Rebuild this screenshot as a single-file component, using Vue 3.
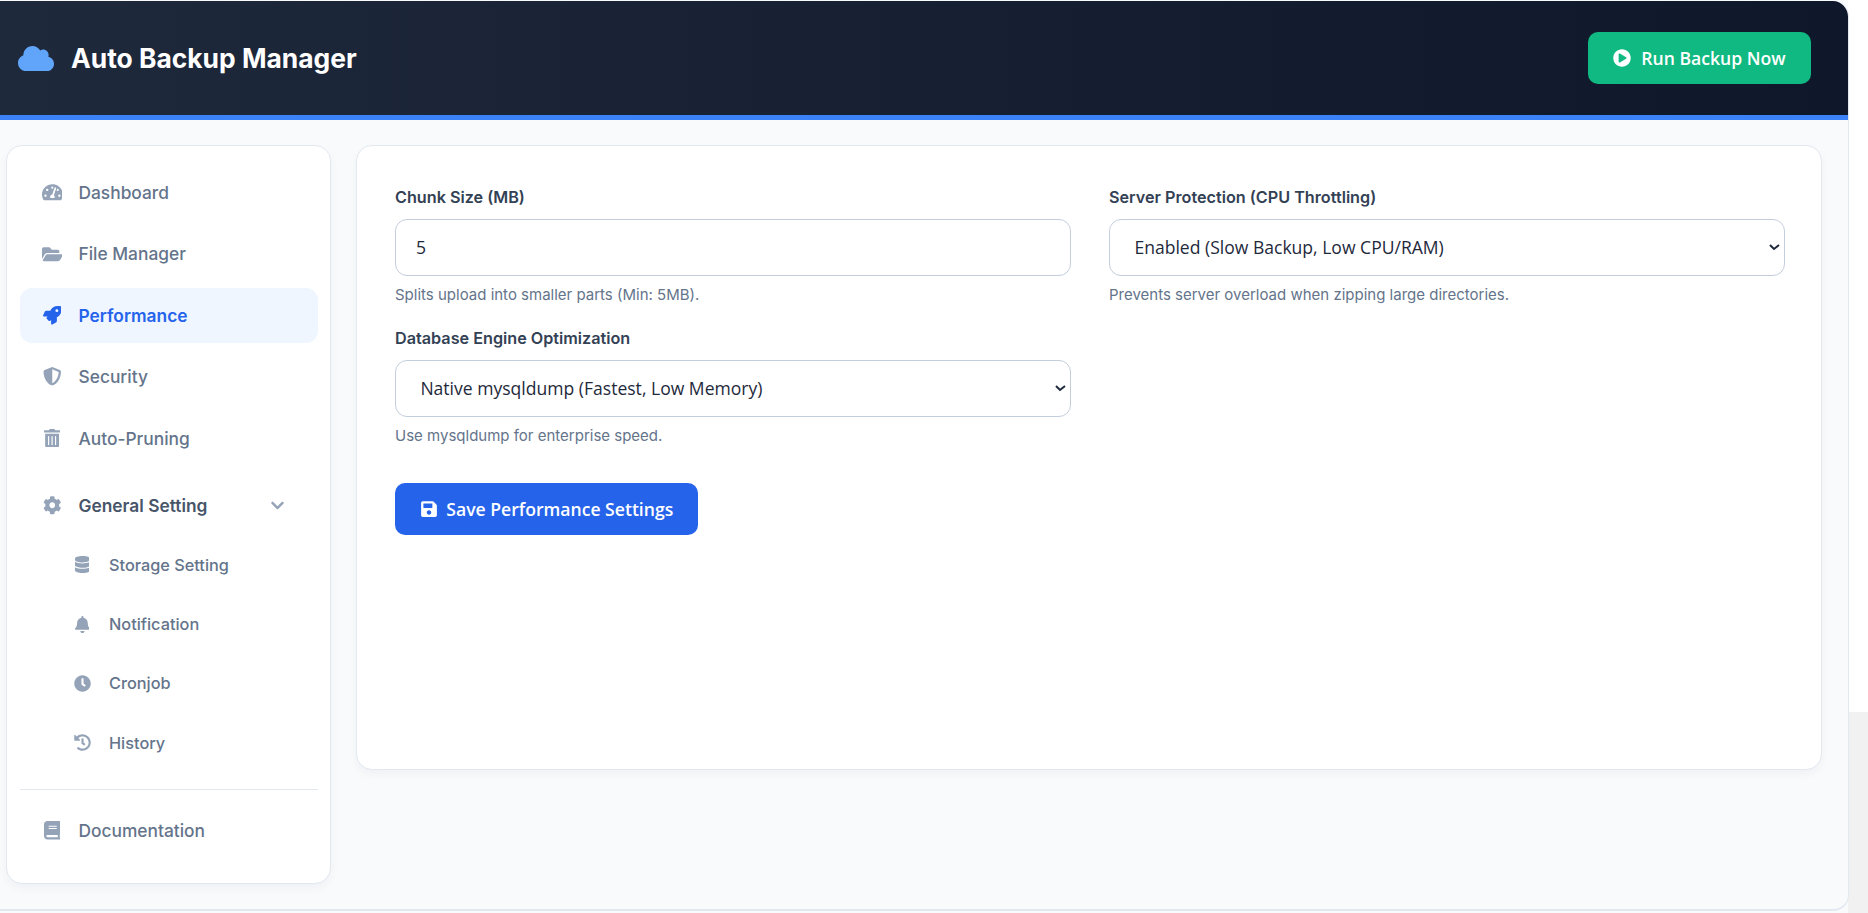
<script setup>
const icons = {
  gauge: { box: '0 0 576 512', d: 'M288 32C128.94 32 0 160.94 0 320c0 52.8 14.25 102.26 39.06 144.8 5.61 9.62 16.3 15.2 27.44 15.2h443c11.14 0 21.83-5.58 27.44-15.2C561.75 422.26 576 372.8 576 320c0-159.06-128.94-288-288-288zm0 64c14.71 0 26.58 10.13 30.32 23.65-1.11 2.26-2.64 4.23-3.45 6.67l-9.22 27.67c-5.13 3.49-10.97 6.01-17.64 6.01-17.67 0-32-14.33-32-32S270.33 96 288 96zM96 384c-17.67 0-32-14.33-32-32s14.33-32 32-32 32 14.33 32 32-14.33 32-32 32zm48-160c-17.67 0-32-14.33-32-32s14.33-32 32-32 32 14.33 32 32-14.33 32-32 32zm246.77-72.41l-61.33 184C343.13 347.33 352 364.54 352 384c0 11.72-3.38 22.55-8.88 32H232.88c-5.5-9.45-8.88-20.28-8.88-32 0-33.94 26.5-61.43 59.9-63.59l61.34-184.01c4.17-12.56 17.73-19.45 30.36-15.17 12.57 4.19 19.35 17.77 15.17 30.36zm14.66 57.2l15.52-46.55c3.47-1.29 7.13-2.23 11.05-2.23 17.67 0 32 14.33 32 32s-14.33 32-32 32c-11.38-.01-20.89-6.28-26.57-15.22zM480 384c-17.67 0-32-14.33-32-32s14.33-32 32-32 32 14.33 32 32-14.33 32-32 32z' },
  folder: { box: '0 0 576 512', d: 'M572.694 292.093L500.27 416.248A63.997 63.997 0 0 1 444.989 448H45.025c-18.523 0-30.064-20.093-20.731-36.093l72.424-124.155A64 64 0 0 1 152 256h399.964c18.523 0 30.064 20.093 20.73 36.093zM152 224h328v-48c0-26.51-21.49-48-48-48H272l-64-64H48C21.49 64 0 85.49 0 112v278.046l69.077-118.418C86.214 242.25 117.989 224 152 224z' },
  rocket: { box: '0 0 512 512', d: 'M505.12019,19.09375c-1.18945-5.53125-6.65819-11-12.207-12.1875C460.716,0,435.507,0,410.40747,0,307.17523,0,245.26909,55.20312,199.05238,128H94.83772c-16.34763.01562-35.55658,11.875-42.88664,26.48438L2.51562,253.29688A28.4,28.4,0,0,0,0,264a24.00867,24.00867,0,0,0,24.00582,24H127.81618l-22.47457,22.46875c-11.36521,11.36133-12.99607,32.25781,0,45.25L156.24582,406.625c11.15623,11.1875,32.15619,13.15625,45.27726,0l22.47457-22.46875V488a24.00867,24.00867,0,0,0,24.00581,24,28.55934,28.55934,0,0,0,10.707-2.51562l98.72834-49.39063c14.62888-7.29687,26.50776-26.5,26.50776-42.85937V312.79688c72.59753-46.3125,128.03493-108.40626,128.03493-211.09376C512.07526,76.5,512.07526,51.29688,505.12019,19.09375ZM384.04033,168A40,40,0,1,1,424.05,128,40.02322,40.02322,0,0,1,384.04033,168Z' },
  shield: { box: '0 0 512 512', d: 'M466.5 83.7l-192-80a48.15 48.15 0 0 0-36.9 0l-192 80C27.7 91.1 16 108.6 16 128c0 198.5 114.5 335.7 221.5 380.3 11.8 4.9 25.1 4.9 36.9 0C360.1 472.6 496 349.3 496 128c0-19.4-11.7-36.9-29.5-44.3zM256.1 446.3l-.1-381 175.9 73.3c-3.3 151.4-82.1 261.1-175.8 307.7z' },
  trash: { box: '0 0 448 512', d: 'M32 464a48 48 0 0 0 48 48h288a48 48 0 0 0 48-48V128H32zm272-256a16 16 0 0 1 32 0v224a16 16 0 0 1-32 0zm-96 0a16 16 0 0 1 32 0v224a16 16 0 0 1-32 0zm-96 0a16 16 0 0 1 32 0v224a16 16 0 0 1-32 0zM432 32H312l-9.4-18.7A24 24 0 0 0 281.1 0H166.8a23.72 23.72 0 0 0-21.4 13.3L136 32H16A16 16 0 0 0 0 48v32a16 16 0 0 0 16 16h416a16 16 0 0 0 16-16V48a16 16 0 0 0-16-16z' },
  cog: { box: '0 0 512 512', d: 'M487.4 315.7l-42.6-24.6c4.3-23.2 4.3-47 0-70.2l42.6-24.6c4.9-2.8 7.1-8.6 5.5-14-11.1-35.6-30-67.8-54.7-94.6-3.8-4.1-10-5.1-14.8-2.3L380.8 110c-17.9-15.4-38.5-27.3-60.8-35.1V25.8c0-5.6-3.9-10.5-9.4-11.7-36.7-8.2-74.3-7.8-109.2 0-5.5 1.2-9.4 6.1-9.4 11.7V75c-22.2 7.9-42.8 19.8-60.8 35.1L88.7 85.5c-4.9-2.8-11-1.9-14.8 2.3-24.7 26.7-43.6 58.9-54.7 94.6-1.7 5.4.6 11.2 5.5 14L67.3 221c-4.3 23.2-4.3 47 0 70.2l-42.6 24.6c-4.9 2.8-7.1 8.6-5.5 14 11.1 35.6 30 67.8 54.7 94.6 3.8 4.1 10 5.1 14.8 2.3l42.6-24.6c17.9 15.4 38.5 27.3 60.8 35.1v49.2c0 5.6 3.9 10.5 9.4 11.7 36.7 8.2 74.3 7.8 109.2 0 5.5-1.2 9.4-6.1 9.4-11.7v-49.2c22.2-7.9 42.8-19.8 60.8-35.1l42.6 24.6c4.9 2.8 11 1.9 14.8-2.3 24.7-26.7 43.6-58.9 54.7-94.6 1.5-5.5-.7-11.3-5.6-14.1zM256 336c-44.1 0-80-35.9-80-80s35.9-80 80-80 80 35.9 80 80-35.9 80-80 80z' },
  chevron: { box: '0 0 448 512', d: 'M207.029 381.476L12.686 187.132c-9.373-9.373-9.373-24.569 0-33.941l22.667-22.667c9.357-9.357 24.522-9.375 33.901-.04L224 284.505l154.745-154.021c9.379-9.335 24.544-9.317 33.901.04l22.667 22.667c9.373 9.373 9.373 24.569 0 33.941L240.971 381.476c-9.373 9.372-24.569 9.372-33.942 0z' },
  database: { box: '0 0 448 512', d: 'M448 73.143v45.714C448 159.143 347.667 192 224 192S0 159.143 0 118.857V73.143C0 32.857 100.333 0 224 0s224 32.857 224 73.143zM448 176v102.857C448 319.143 347.667 352 224 352S0 319.143 0 278.857V176c48.125 33.143 136.208 48.572 224 48.572S399.874 209.143 448 176zm0 160v102.857C448 479.143 347.667 512 224 512S0 479.143 0 438.857V336c48.125 33.143 136.208 48.572 224 48.572S399.874 369.143 448 336z' },
  bell: { box: '0 0 448 512', d: 'M224 512c35.32 0 63.97-28.65 63.97-64H160.03c0 35.35 28.65 64 63.97 64zm215.39-149.71c-19.32-20.76-55.47-51.99-55.47-154.29 0-77.7-54.48-139.9-127.94-155.16V32c0-17.67-14.32-32-31.98-32s-31.98 14.33-31.98 32v20.84C118.56 68.1 64.08 130.3 64.08 208c0 102.3-36.15 133.53-55.47 154.29-6 6.45-8.66 14.16-8.61 21.71.11 16.4 12.98 32 32.1 32h383.8c19.12 0 32-15.6 32.1-32 .05-7.55-2.61-15.27-8.61-21.71z' },
  clock: { box: '0 0 512 512', d: 'M256,8C119,8,8,119,8,256S119,504,256,504,504,393,504,256,393,8,256,8Zm92.49,313h0l-20,25a16,16,0,0,1-22.49,2.5h0l-67-49.72a40,40,0,0,1-15-31.23V112a16,16,0,0,1,16-16h32a16,16,0,0,1,16,16V256l58,42.5A16,16,0,0,1,348.49,321Z' },
  history: { box: '0 0 512 512', d: 'M504 255.531c.253 136.64-111.18 248.372-247.82 248.468-59.015.042-113.223-20.53-155.822-54.911-11.077-8.94-11.905-25.541-1.839-35.607l11.267-11.267c8.609-8.609 22.353-9.551 31.891-1.984C173.062 425.135 212.781 440 256 440c101.705 0 184-82.311 184-184 0-101.705-82.311-184-184-184-48.814 0-93.149 18.969-126.068 49.932l50.754 50.754c10.08 10.08 2.941 27.314-11.313 27.314H24c-8.837 0-16-7.163-16-16V38.627c0-14.254 17.234-21.393 27.314-11.314l49.372 49.372C129.209 34.136 189.552 8 256 8c136.81 0 247.747 110.78 248 247.531zm-180.912 78.784l9.823-12.63c8.138-10.463 6.253-25.542-4.21-33.679L288 256.349V152c0-13.255-10.745-24-24-24h-16c-13.255 0-24 10.745-24 24v135.651l65.409 50.874c10.463 8.137 25.541 6.253 33.679-4.21z' },
  book: { box: '0 0 448 512', d: 'M448 360V24c0-13.3-10.7-24-24-24H96C43 0 0 43 0 96v320c0 53 43 96 96 96h328c13.3 0 24-10.7 24-24v-16c0-7.5-3.5-14.3-8.9-18.7-4.2-15.4-4.2-59.3 0-74.7 5.4-4.3 8.9-11.1 8.9-18.6zM128 134c0-3.3 2.7-6 6-6h212c3.3 0 6 2.7 6 6v20c0 3.3-2.7 6-6 6H134c-3.3 0-6-2.7-6-6v-20zm0 64c0-3.3 2.7-6 6-6h212c3.3 0 6 2.7 6 6v20c0 3.3-2.7 6-6 6H134c-3.3 0-6-2.7-6-6v-20zm253.4 250H96c-17.7 0-32-14.3-32-32 0-17.6 14.4-32 32-32h285.4c-1.9 17.1-1.9 46.9 0 64z' },
  save: { box: '0 0 448 512', d: 'M433.941 129.941l-83.882-83.882A48 48 0 0 0 316.118 32H48C21.49 32 0 53.49 0 80v352c0 26.51 21.49 48 48 48h352c26.51 0 48-21.49 48-48V163.882a48 48 0 0 0-14.059-33.941zM224 416c-35.346 0-64-28.654-64-64 0-35.346 28.654-64 64-64s64 28.654 64 64c0 35.346-28.654 64-64 64zm96-304.52V212c0 6.627-5.373 12-12 12H76c-6.627 0-12-5.373-12-12V108c0-6.627 5.373-12 12-12h228.52c3.183 0 6.235 1.264 8.485 3.515l3.48 3.48A11.996 11.996 0 0 1 320 111.48z' },
  play: { box: '0 0 512 512', d: 'M256 8C119 8 8 119 8 256s111 248 248 248 248-111 248-248S393 8 256 8zm115.7 272l-176 101c-15.8 8.8-35.7-2.5-35.7-21V152c0-18.4 19.8-29.8 35.7-21l176 107c16.4 9.2 16.4 32.9 0 42z' },
  cloud: { box: '0 0 640 512', d: 'M537.6 226.6c4.1-10.7 6.4-22.4 6.4-34.6 0-53-43-96-96-96-19.7 0-38.1 6-53.3 16.2C367 64.2 315.3 32 256 32c-88.4 0-160 71.6-160 160 0 2.7.1 5.4.2 8.1C40.2 219.8 0 273.2 0 336c0 79.5 64.5 144 144 144h368c70.7 0 128-57.3 128-128 0-61.9-44-113.6-102.4-125.4z' }
}
const topItems = [
  { label: 'Dashboard', icon: 'gauge' },
  { label: 'File Manager', icon: 'folder' },
  { label: 'Performance', icon: 'rocket', active: true },
  { label: 'Security', icon: 'shield' },
  { label: 'Auto-Pruning', icon: 'trash' }
]
const subItems = [
  { label: 'Storage Setting', icon: 'database' },
  { label: 'Notification', icon: 'bell' },
  { label: 'Cronjob', icon: 'clock' },
  { label: 'History', icon: 'history' }
]
</script>

<template>
  <div class="page">
    <div class="panel">
      <header class="header">
        <div class="brand">
          <svg class="cloud" :viewBox="icons.cloud.box"><path :d="icons.cloud.d" /></svg>
          <h1>Auto Backup Manager</h1>
        </div>
        <button class="run" type="button">
          <svg class="btn-ico" :viewBox="icons.play.box"><path :d="icons.play.d" /></svg>
          Run Backup Now
        </button>
      </header>
      <div class="body">
        <aside class="side">
          <nav class="nav">
            <a v-for="it in topItems" :key="it.label" class="item" :class="{ active: it.active }">
              <span class="ico"><svg :viewBox="icons[it.icon].box"><path :d="icons[it.icon].d" /></svg></span>
              {{ it.label }}
            </a>
            <a class="item group">
              <span class="ico"><svg :viewBox="icons.cog.box"><path :d="icons.cog.d" /></svg></span>
              General Setting
              <svg class="chev" :viewBox="icons.chevron.box"><path :d="icons.chevron.d" /></svg>
            </a>
            <div class="subs">
              <a v-for="it in subItems" :key="it.label" class="sub">
                <span class="ico small"><svg :viewBox="icons[it.icon].box"><path :d="icons[it.icon].d" /></svg></span>
                {{ it.label }}
              </a>
            </div>
            <div class="divider"></div>
            <a class="item">
              <span class="ico"><svg :viewBox="icons.book.box"><path :d="icons.book.d" /></svg></span>
              Documentation
            </a>
          </nav>
        </aside>
        <main class="card">
          <div class="grid">
            <div class="field">
              <label>Chunk Size (MB)</label>
              <input class="control" type="number" value="5" />
              <p class="hint">Splits upload into smaller parts (Min: 5MB).</p>
            </div>
            <div class="field">
              <label>Server Protection (CPU Throttling)</label>
              <select class="control sel">
                <option>Enabled (Slow Backup, Low CPU/RAM)</option>
              </select>
              <p class="hint">Prevents server overload when zipping large directories.</p>
            </div>
            <div class="field">
              <label>Database Engine Optimization</label>
              <select class="control sel">
                <option>Native mysqldump (Fastest, Low Memory)</option>
              </select>
              <p class="hint">Use mysqldump for enterprise speed.</p>
            </div>
          </div>
          <button class="save" type="button">
            <svg class="btn-ico" :viewBox="icons.save.box"><path :d="icons.save.d" /></svg>
            Save Performance Settings
          </button>
        </main>
      </div>
    </div>
  </div>
</template>

<style>
html, body { margin: 0; }
</style>

<style scoped>
.page {
  width: 1868px;
  height: 913px;
  overflow: hidden;
  padding-top: 1px;
  box-sizing: border-box;
  background: linear-gradient(90deg, #f8fafc 0 1848px, transparent 1848px), linear-gradient(#fff 712px, #f1f1f1 712px);
  font-family: Inter, sans-serif;
}
.panel {
  width: 1849px;
  height: 910px;
  box-sizing: border-box;
  background: #f8fafc;
  border-right: 1px solid #e2e8f0;
  border-bottom: 2px solid #e2e8f0;
  border-radius: 0 16px 16px 0;
  overflow: hidden;
}
.header {
  height: 119px;
  box-sizing: border-box;
  border-bottom: 5px solid #3b82f6;
  background: linear-gradient(90deg, #1e293b, #0f172a);
  display: flex;
  align-items: center;
  justify-content: space-between;
  padding: 0 37px 0 18px;
}
.brand { display: flex; align-items: center; gap: 17px; }
.cloud { width: 36px; height: 29px; fill: #60a5fa; }
.brand h1 {
  margin: 0;
  color: #fff;
  font-size: 26.4px;
  font-weight: 700;
}
.run, .save {
  display: flex;
  align-items: center;
  border: 0;
  color: #fff;
  font-family: "Open Sans", sans-serif;
  font-size: 17.6px;
  font-weight: 600;
}
.run {
  width: 223px;
  height: 52px;
  justify-content: center;
  gap: 10px;
  background: #10b981;
  border-radius: 10px;
}
.btn-ico { width: 18px; height: 18px; fill: #fff; }
.body {
  display: flex;
  align-items: flex-start;
  gap: 25px;
  padding: 25px 26px 0 6px;
}
.side {
  width: 325px;
  height: 739px;
  box-sizing: border-box;
  padding: 19px 12px 0 13px;
  background: #fff;
  border: 1px solid #e2e8f0;
  border-radius: 16px;
  box-shadow: 0 4px 10px rgba(15, 23, 42, 0.04);
  flex: none;
}
.nav { display: flex; flex-direction: column; gap: 6.4px; }
.item, .sub {
  display: flex;
  align-items: center;
  color: #64748b;
  font-weight: 500;
}
.item {
  height: 55px;
  padding: 0 20px;
  gap: 14.5px;
  font-size: 17.35px;
  border-radius: 12px;
}
.item.active { background: #eff6ff; color: #2563eb; font-weight: 600; }
.item.group { margin-top: 6px; color: #475569; font-weight: 600; }
.ico { width: 24px; display: flex; justify-content: center; flex: none; }
.ico svg { height: 18.5px; fill: #94a3b8; }
.active .ico svg { fill: #2563eb; }
.chev { width: 13px; height: 15px; fill: #94a3b8; margin-left: auto; margin-right: 14px; }
.subs { display: flex; flex-direction: column; gap: 6.4px; margin-top: -1.2px; }
.sub {
  height: 53px;
  padding-left: 50px;
  gap: 15px;
  font-size: 16.3px;
}
.ico.small svg { height: 17px; }
.divider { height: 1px; margin: 13.4px 0 6.6px; background: #e2e8f0; }
.card {
  flex: 1;
  height: 625px;
  box-sizing: border-box;
  padding: 41.5px 36px 38px 38px;
  background: #fff;
  border: 1px solid #e2e8f0;
  border-radius: 16px;
  box-shadow: 0 4px 10px rgba(15, 23, 42, 0.04);
}
.grid {
  display: grid;
  grid-template-columns: 1fr 1fr;
  column-gap: 38px;
  row-gap: 23.5px;
}
.field { display: flex; flex-direction: column; }
.field label {
  color: #334155;
  font-size: 16.2px;
  font-weight: 600;
  line-height: 19px;
  margin-bottom: 12px;
}
.control {
  width: 100%;
  height: 57px;
  box-sizing: border-box;
  padding: 0 20px;
  font-family: "Open Sans", sans-serif;
  font-size: 17.6px;
  color: #1e293b;
  background: #fff;
  border: 1px solid #c3cedc;
  border-radius: 12px;
  outline: none;
}
.sel {
  zoom: 1.2;
  height: 48px;
  padding: 0 17px;
  font-size: 14.63px;
  border-radius: 10px;
}
.hint {
  margin: 9px 0 0;
  color: #64748b;
  font-size: 15px;
  line-height: 20px;
}
.save {
  margin-top: 37px;
  width: 303px;
  height: 52px;
  justify-content: center;
  gap: 8.5px;
  background: #2563eb;
  border-radius: 10px;
}
</style>
